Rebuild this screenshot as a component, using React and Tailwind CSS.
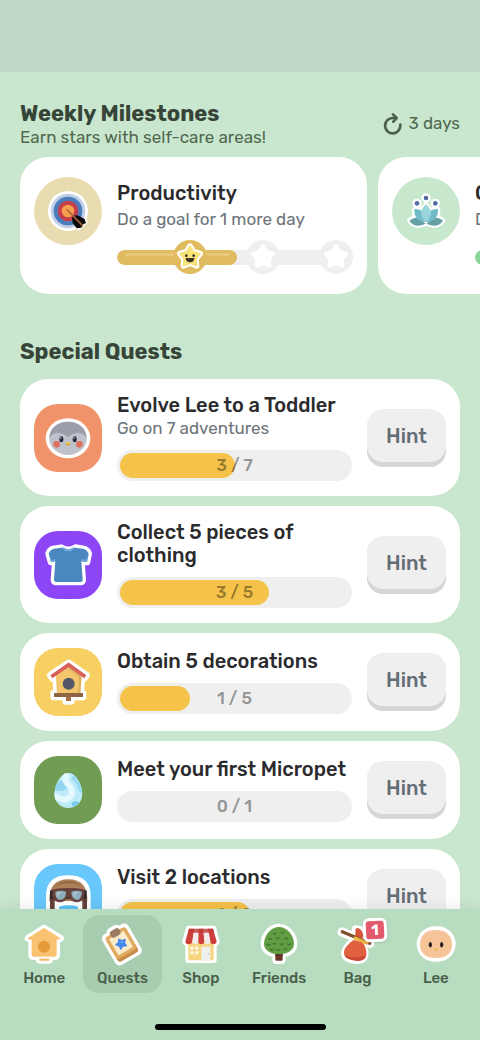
import clsx from "clsx";

const STAR = "51,18 62,35 82,41 69,57 71,78 51,70 31,78 33,57 20,41 40,35";

const TargetIcon = () => (
  <svg viewBox="0 0 204 204" className="size-[68px] shrink-0" aria-hidden="true">
    <circle cx="102" cy="102" r="102" fill="#e8dcb0" />
    <circle cx="102" cy="102" r="60" fill="#fff" />
    <path d="M104 98 L150 112 L158 136 L136 156 L112 146Z" fill="#fff" stroke="#fff" strokeWidth="6" strokeLinejoin="round" />
    <circle cx="102" cy="102" r="52" fill="#c2cfe6" />
    <circle cx="102" cy="102" r="43" fill="#4b7dbd" />
    <circle cx="102" cy="102" r="31" fill="#c63d4c" />
    <circle cx="102" cy="102" r="19" fill="#f6a04b" />
    <path d="M114 122 Q120 112 134 116 L152 126 L156 138 L148 142 L142 152 L128 154 L116 138Z" fill="#0b0b0c" />
    <path d="M100 99 L145 145" stroke="#a7653f" strokeWidth="5" strokeLinecap="round" />
  </svg>
);

const LotusIcon = () => (
  <svg viewBox="0 0 204 204" className="size-[68px] shrink-0" aria-hidden="true">
    <circle cx="102" cy="102" r="102" fill="#c8e8ce" />
    <g stroke="#fff" strokeWidth="14" strokeLinejoin="round" fill="#fff">
      <path d="M52 131 Q64 119 80 124 L102 139 L126 124 Q142 119 153 131 Q140 147 122 145 L102 140 L82 145 Q64 147 52 131Z" />
      <path d="M102 83 L116 99 L137 96 Q142 124 124 133 L80 133 Q63 124 68 96 L88 99Z" />
      <circle cx="102" cy="63" r="7" />
      <circle cx="75" cy="79" r="7" />
      <circle cx="130" cy="79" r="7" />
    </g>
    <path d="M52 131 Q70 117 84 126 L101 140 Q68 156 52 131Z" fill="#68a1a5" />
    <path d="M153 131 Q136 117 120 126 L103 140 Q137 156 153 131Z" fill="#68a1a5" />
    <path d="M67 96 Q104 96 102 135 Q65 133 67 96Z" fill="#72bcc8" />
    <path d="M138 96 Q100 96 102 135 Q140 133 138 96Z" fill="#72bcc8" />
    <path d="M102 82 Q131 108 102 136 Q73 108 102 82Z" fill="#9ad5dc" />
    <g fill="#506ba6">
      <circle cx="102" cy="63" r="7" />
      <circle cx="75" cy="79" r="7" />
      <circle cx="130" cy="79" r="7" />
    </g>
  </svg>
);

const PenguinIcon = () => (
  <svg viewBox="0 0 204 204" className="size-[68px]" aria-hidden="true">
    <ellipse cx="102" cy="103" rx="67" ry="60" fill="#fff" />
    <ellipse cx="102" cy="103" rx="56" ry="50" fill="#bfc1cb" />
    <path d="M46 104 C46 73 68 53 102 53 C136 53 158 73 158 104 C150 82 122 82 102 99 C82 82 54 82 46 104Z" fill="#9b9ea9" />
    <circle cx="68" cy="121" r="10" fill="#df6e5e" />
    <circle cx="136" cy="121" r="10" fill="#df6e5e" />
    <ellipse cx="82" cy="106" rx="6" ry="9" fill="#202638" />
    <ellipse cx="122" cy="106" rx="6" ry="9" fill="#202638" />
    <circle cx="80" cy="102" r="2" fill="#fff" />
    <circle cx="120" cy="102" r="2" fill="#fff" />
    <path d="M94 118 L102 113 L110 118 L102 127Z" fill="#f2cf4d" />
    <path d="M95 120 L102 122 L109 120" stroke="#a97a2e" strokeWidth="2" fill="none" />
  </svg>
);

const ShirtIcon = () => (
  <svg viewBox="0 0 204 204" className="size-[68px]" aria-hidden="true">
    <path
      d="M82 50 Q103 64 124 50 L150 54 Q160 57 164 68 L159 93 L142 91 L146 146 Q146 152 140 153 L66 153 Q60 152 60 146 L64 91 L51 93 L44 68 Q48 57 57 54Z"
      fill="#4a86c0"
      stroke="#fff"
      strokeWidth="20"
      strokeLinejoin="round"
      paintOrder="stroke"
    />
    <path d="M82 50 Q103 72 124 50 L118 49 Q103 60 88 49Z" fill="#74acd9" />
    <path d="M45 68 L51 93 L64 91 L65 84 L53 87Z M164 68 L159 93 L142 91 L141 84 L155 87Z" fill="#69a5d6" />
  </svg>
);

const BirdhouseIcon = () => (
  <svg viewBox="0 0 204 204" className="size-[68px]" aria-hidden="true">
    <path
      d="M104 46 L156 82 L150 90 L142 87 L139 134 L146 136 V146 H111 V159 H96 V146 H60 V136 L69 134 L66 87 L56 90 L50 82Z"
      fill="#fff"
      stroke="#fff"
      strokeWidth="22"
      strokeLinejoin="round"
    />
    <path d="M104 54 L143 82 L139 136 H69 L65 82Z" fill="#f3c56c" />
    <path d="M104 54 L143 82 L139 136 H132 L135 86 L104 64Z" fill="#dfaf61" />
    <path d="M52 86 L104 50 L154 86" fill="none" stroke="#d9605a" strokeWidth="11" />
    <circle cx="104" cy="107" r="18" fill="#535767" />
    <rect x="60" y="135" width="87" height="12" rx="1" fill="#8e6442" />
    <rect x="96" y="147" width="15" height="12" fill="#a37248" />
  </svg>
);

const EggIcon = () => (
  <svg viewBox="0 0 204 204" className="size-[68px]" aria-hidden="true">
    <defs>
      <clipPath id="egg-shell">
        <path d="M103 50 C126 50 145 88 145 114 C145 139 126 156 103 156 C80 156 61 139 61 114 C61 88 80 50 103 50Z" />
      </clipPath>
    </defs>
    <g clipPath="url(#egg-shell)">
      <rect x="60" y="48" width="90" height="110" fill="#bdebf9" />
      <path d="M70 82 Q84 66 94 76 Q104 88 98 98 Q84 110 60 102Z" fill="#94d6ef" />
      <path d="M118 54 Q140 70 148 112 Q132 108 130 94 Q128 78 112 70Z" fill="#9bdcf2" />
      <path d="M56 116 Q96 144 112 118 Q118 98 102 84 Q88 72 100 54" fill="none" stroke="#e4f9fe" strokeWidth="18" />
      <path d="M112 142 Q122 132 136 138 Q132 150 116 152Z" fill="#7cc8ea" />
    </g>
  </svg>
);

const AviatorIcon = () => (
  <svg viewBox="0 0 204 204" className="size-[68px]" aria-hidden="true">
    <path d="M36 178 V96 Q36 34 103 34 Q170 34 170 96 V178Z" fill="#fff" />
    <path d="M46 112 Q44 46 103 46 Q162 46 160 112Z" fill="#ad8057" />
    <path d="M60 68 Q103 32 146 68 Q124 58 103 58 Q82 58 60 68Z" fill="#936845" />
    <path d="M48 104 H62 V170 H48Z M145 104 H159 V170 H145Z" fill="#65413a" />
    <path d="M64 112 H143 V170 H64Z" fill="#fff" />
    <path d="M75 128 Q103 120 132 128 V178 H75Z" fill="#5bc1f7" />
    <path d="M48 79 H158 V105 H48Z" fill="#352a2f" />
    <path d="M56 76 Q103 68 150 76 Q156 112 130 115 Q112 114 103 98 Q94 114 76 115 Q50 112 56 76Z" fill="#68423d" />
    <path d="M64 84 Q78 77 96 83 Q96 106 78 108 Q64 106 64 84Z M112 83 Q130 77 144 84 Q142 106 130 108 Q112 106 112 83Z" fill="#8fb0bf" />
    <path d="M68 88 L82 83 L70 99Z M118 87 L132 82 L120 99Z" fill="#adc7d1" />
  </svg>
);

const HomeIcon = () => (
  <svg viewBox="0 0 120 120" className="size-10 overflow-visible" aria-hidden="true">
    <path
      d="M60 12 L110 43 L98 48 V92 Q98 98 92 98 H76 V109 H46 V98 H29 Q23 98 23 92 V48 L12 43Z"
      fill="#fff"
      stroke="#fff"
      strokeWidth="20"
      strokeLinejoin="round"
    />
    <path d="M60 12 L108 42 Q110 47 98 47 V92 Q98 98 92 98 H29 Q23 98 23 92 V47 Q10 47 12 42Z" fill="#f9c271" />
    <circle cx="60" cy="68" r="18" fill="#e29a3b" />
    <path d="M49 107 H73" stroke="#f4bd6d" strokeWidth="7" strokeLinecap="round" />
  </svg>
);

const ClipboardIcon = () => (
  <svg viewBox="0 0 120 120" className="size-10 overflow-visible" aria-hidden="true">
    <g transform="rotate(-30 60 60)">
      <rect x="14" y="8" width="90" height="106" rx="15" fill="#fff" />
      <rect x="36" y="0" width="46" height="34" rx="14" fill="#fff" />
      <rect x="24" y="20" width="70" height="84" rx="9" fill="#c98b45" />
      <rect x="24" y="18" width="70" height="76" rx="9" fill="#e2ab62" />
      <rect x="34" y="28" width="50" height="56" rx="2" fill="#fdebc8" />
      <rect x="43" y="10" width="32" height="22" rx="9" fill="#9c7b62" />
      <path
        d="M59 43 L65 51 L75 53 L68 61 L69 71 L59 67 L49 71 L50 61 L43 53 L53 51Z"
        fill="#4789f1"
        stroke="#4789f1"
        strokeWidth="4"
        strokeLinejoin="round"
      />
      <circle cx="63" cy="54" r="3" fill="#79b0fb" />
    </g>
  </svg>
);

const ShopIcon = () => (
  <svg viewBox="0 0 120 120" className="size-10 overflow-visible" aria-hidden="true">
    <path d="M23 14 H97 L107 54 L98 62 V108 H22 V62 L13 54Z" fill="#fff" stroke="#fff" strokeWidth="18" strokeLinejoin="round" />
    <rect x="22" y="44" width="76" height="65" rx="4" fill="#f7d57f" />
    <rect x="61" y="68" width="27" height="41" fill="#eef0ef" />
    <circle cx="82" cy="90" r="2" fill="#b9a887" />
    <rect x="28" y="68" width="24" height="23" fill="#fff7de" />
    <path d="M40 68 V91 M28 79 H52" stroke="#f2c766" strokeWidth="3" />
    <path d="M24 14 H40 L34 52 Q33 61 23 61 Q13 61 13 52Z" fill="#cc3f3b" />
    <path d="M40 14 H53 L52 54 Q50 61 42 61 Q34 60 34 52Z" fill="#f4ecea" />
    <path d="M53 14 H67 L70 52 Q69 61 61 61 Q52 60 52 54Z" fill="#cc3f3b" />
    <path d="M67 14 H81 L88 52 Q87 61 79 61 Q70 60 70 52Z" fill="#f4ecea" />
    <path d="M81 14 H96 L107 52 Q106 61 97 61 Q88 60 88 52Z" fill="#cc3f3b" />
    <path d="M24 14 H96 L99 26 H21Z" fill="#c23936" opacity=".8" />
  </svg>
);

const TreeIcon = () => (
  <svg viewBox="0 0 120 120" className="size-10 overflow-visible" aria-hidden="true">
    <g fill="#fff" stroke="#fff" strokeWidth="20" strokeLinejoin="round">
      <path d="M60 9 C84 9 105 34 105 60 C105 78 88 89 70 89 V107 Q70 110 66 110 H54 Q50 110 50 107 V89 C32 89 15 78 15 60 C15 34 36 9 60 9Z" />
    </g>
    <path d="M49 84 H71 V107 Q71 110 66 110 H54 Q49 110 49 107Z" fill="#6d3627" />
    <path d="M49 86 H71 V95 H49Z" fill="#4d261f" />
    <path d="M60 9 C84 9 105 34 105 60 C105 78 84 91 60 91 C36 91 15 78 15 60 C15 34 36 9 60 9Z" fill="#619d42" />
    <path
      d="M42 28 q5 4 9 0 M66 25 q5 4 9 0 M29 44 q5 4 9 0 M52 42 q5 4 9 0 M77 43 q5 4 9 0 M24 61 q5 4 9 0 M42 58 q5 4 9 0 M64 60 q5 4 9 0 M86 60 q5 4 9 0 M34 76 q5 4 9 0 M54 77 q5 4 9 0 M75 75 q5 4 9 0"
      fill="none"
      stroke="#3f7a30"
      strokeWidth="4"
      strokeLinecap="round"
    />
  </svg>
);

const BagIcon = () => (
  <svg viewBox="0 0 120 120" className="size-10 overflow-visible" aria-hidden="true">
    <g fill="#fff" stroke="#fff" strokeWidth="20" strokeLinejoin="round" strokeLinecap="round">
      <path d="M15 24 L99 58" strokeWidth="28" />
      <path d="M55 14 L70 16 L78 38 L73 52 Q90 84 82 101 Q74 112 52 109 Q24 106 22 89 Q24 70 52 46Z" />
    </g>
    <path d="M56 14 Q64 8 74 20 L80 36 L70 52 L54 44Z" fill="#d9543d" />
    <path d="M50 48 L76 54 C86 66 92 88 86 100 C80 112 62 112 50 109 C30 105 20 98 21 84 C23 70 36 58 50 48Z" fill="#e0603f" />
    <path d="M23 93 Q50 108 87 94 C84 112 62 112 50 109 C36 106 25 103 23 93Z" fill="#c94a36" />
    <path d="M16 23 L98 58" stroke="#81502c" strokeWidth="10" strokeLinecap="round" />
    <path d="M54 42 L90 57" stroke="#edb13f" strokeWidth="9" strokeLinecap="round" />
  </svg>
);

const LeeIcon = () => (
  <svg viewBox="0 0 120 120" className="size-10 overflow-visible" aria-hidden="true">
    <rect x="2" y="7" width="117" height="106" rx="53" fill="#fff" />
    <path d="M60 18 C92 18 108 36 108 62 C108 88 90 102 60 102 C30 102 12 88 12 62 C12 36 28 18 60 18Z" fill="#f7c49a" />
    <ellipse cx="43" cy="62" rx="5" ry="8" fill="#2d211e" />
    <ellipse cx="77" cy="62" rx="5" ry="8" fill="#2d211e" />
    <path d="M54 75 L60 73 L66 75 L60 82Z" fill="#edb938" />
  </svg>
);

const ReloadIcon = () => (
  <svg viewBox="0 0 60 72" className="h-6 w-5" fill="none" stroke="#4c614d" strokeWidth="8" strokeLinecap="round" strokeLinejoin="round" aria-hidden="true">
    <path d="M52 38 A23 23 0 1 1 29 18 H38" />
    <path d="M30 7 L41 18 L31 29" />
  </svg>
);

const milestones = [
  {
    title: "Productivity",
    detail: "Do a goal for 1 more day",
    icon: <TargetIcon />,
    fill: "bg-[#e0bb5f]",
    shine: "bg-[#e8c97c]",
    done: 1,
    progress: 51,
  },
  {
    title: "Calmness",
    detail: "Do a goal for 3 more days",
    icon: <LotusIcon />,
    fill: "bg-[#86d69a]",
    shine: "bg-[#a3e2b2]",
    done: 0,
    progress: 20,
  },
];

const quests = [
  { title: "Evolve Lee to a Toddler", detail: "Go on 7 adventures", current: 3, total: 7, icon: <PenguinIcon />, tile: "bg-[#f0936a]" },
  { title: "Collect 5 pieces of clothing", current: 3, total: 5, icon: <ShirtIcon />, tile: "bg-[#8c46f5]" },
  { title: "Obtain 5 decorations", current: 1, total: 5, icon: <BirdhouseIcon />, tile: "bg-[#f8cf63]" },
  { title: "Meet your first Micropet", current: 0, total: 1, icon: <EggIcon />, tile: "bg-[#719c53]" },
  { title: "Visit 2 locations", current: 1, total: 2, icon: <AviatorIcon />, tile: "bg-[#68c8fb]" },
];

const tabs = [
  { label: "Home", icon: <HomeIcon /> },
  { label: "Quests", icon: <ClipboardIcon />, active: true },
  { label: "Shop", icon: <ShopIcon /> },
  { label: "Friends", icon: <TreeIcon /> },
  { label: "Bag", icon: <BagIcon />, badge: 1 },
  { label: "Lee", icon: <LeeIcon /> },
];

const StarStep = ({ done, fill }) => (
  <span className={clsx("size-[34px] rounded-full", done ? fill : "bg-[#efefef]")}>
    <svg viewBox="0 0 102 102" aria-hidden="true">
      <polygon points={STAR} fill="#fff" stroke="#fff" strokeWidth={done ? 16 : 10} strokeLinejoin="round" />
      {done && (
        <>
          <polygon points={STAR} fill="#f8e27a" stroke="#f8e27a" strokeWidth="4" strokeLinejoin="round" />
          <circle cx="40" cy="47" r="4" fill="#3b3322" />
          <circle cx="62" cy="47" r="4" fill="#3b3322" />
          <path d="M38 54 H64 Q63 67 51 67 Q39 67 38 54Z" fill="#3b3322" />
        </>
      )}
    </svg>
  </span>
);

const MilestoneCard = ({ title, detail, icon, fill, shine, done, progress }) => (
  <article className="flex w-[347px] shrink-0 gap-[15px] rounded-[28px] bg-white px-[14px] py-5">
    {icon}
    <div className="min-w-0 flex-1 pt-1">
      <h3 className="text-[20px] leading-6 font-medium text-[#2b2b2d]">{title}</h3>
      <p className="mt-[2px] text-[17px] leading-6 text-[#6e7479]">{detail}</p>
      <div className="relative mt-[9px] flex h-[34px] items-center">
        <div className="h-[15px] w-full overflow-hidden rounded-full bg-[#efefef]">
          <div className={clsx("h-full rounded-full px-2 pt-[3px]", fill)} style={{ width: `${progress}%` }}>
            <div className={clsx("h-[3px] rounded-full", shine)} />
          </div>
        </div>
        <div className="absolute inset-0 flex justify-end gap-[39px]">
          {[0, 1, 2].map((step) => (
            <StarStep key={step} done={step < done} fill={fill} />
          ))}
        </div>
      </div>
    </div>
  </article>
);

const QuestCard = ({ title, detail, current, total, icon, tile }) => {
  const ratio = current / total;

  return (
    <li className="flex items-center gap-[15px] rounded-[28px] bg-white px-[14px] py-[15px]">
      <div className={clsx("size-[68px] shrink-0 overflow-hidden rounded-[24px]", tile)}>{icon}</div>
      <div className="min-w-0 flex-1">
        <h3 className="text-[20px] leading-[23px] font-medium text-[#2b2b2d]">{title}</h3>
        {detail && <p className="text-[17px] leading-[23px] text-[#6e7479]">{detail}</p>}
        <div
          role="progressbar"
          aria-label={title}
          aria-valuenow={current}
          aria-valuemax={total}
          className="relative mt-[10px] h-[31px] rounded-full bg-[#efefef] p-[3px]"
        >
          {current > 0 && (
            <div
              className="h-full rounded-full bg-[#f5c34a]"
              style={{ width: `calc(30px + (100% - 30px) * ${ratio})` }}
            />
          )}
          <span className="absolute inset-0 flex items-center justify-center text-[17px] font-medium text-black/40">
            {current} / {total}
          </span>
        </div>
      </div>
      <button className="h-[58px] w-[79px] shrink-0 rounded-[16px] bg-[#efefef] pb-1 text-[20px] font-medium text-[#656d76] shadow-[inset_0_-5px_0_#d6d6d6]">
        Hint
      </button>
    </li>
  );
};

const App = () => {
  return (
    <div className="flex h-screen flex-col bg-[#c8e7ce] font-['Rubik',Roboto,sans-serif]">
      <div className="h-[72px] shrink-0 bg-[#bdd8c7]" />

      <main className="min-h-0 flex-1 overflow-y-auto pt-7 [scrollbar-width:none]">
        <section>
          <header className="flex items-center justify-between px-5">
            <div>
              <h2 className="text-[22px] leading-[27px] font-bold text-[#374539]">Weekly Milestones</h2>
              <p className="text-[17px] leading-[21px] text-[#52674f]">Earn stars with self-care areas!</p>
            </div>
            <div className="flex items-center gap-[6px] text-[17px] text-[#52674f]">
              <ReloadIcon />
              3 days
            </div>
          </header>
          <div className="mt-[9px] flex gap-[11px] overflow-x-auto px-5 [scrollbar-width:none]">
            {milestones.map((milestone) => (
              <MilestoneCard key={milestone.title} {...milestone} />
            ))}
          </div>
        </section>

        <section className="mt-11 px-5 pb-5">
          <h2 className="text-[22px] leading-[27px] font-bold text-[#374539]">Special Quests</h2>
          <ul className="mt-[14px] flex flex-col gap-[10px]">
            {quests.map((quest) => (
              <QuestCard key={quest.title} {...quest} />
            ))}
          </ul>
        </section>
      </main>

      <nav className="relative shrink-0 bg-[#b7dcc0] px-[5px] pt-[6px] pb-[10px] shadow-[0_-2px_14px_rgba(0,0,0,0.08)]">
        <ul className="grid grid-cols-6">
          {tabs.map(({ label, icon, active, badge }) => (
            <li key={label}>
              <a
                href={`#${label.toLowerCase()}`}
                aria-current={active ? "page" : undefined}
                className={clsx(
                  "flex h-[78px] flex-col items-center gap-1 rounded-[16px] pt-[9px] text-[15px] leading-5 font-medium text-[#495f4a]",
                  active && "bg-[#a8ccb0]"
                )}
              >
                <span className="relative">
                  {icon}
                  {badge && (
                    <span className="absolute -top-[6px] left-[26px] flex size-6 -rotate-3 items-center justify-center rounded-[6px] border-[3px] border-white bg-[#e1596b] text-[15px] leading-none font-bold text-white shadow-sm">
                      {badge}
                    </span>
                  )}
                </span>
                {label}
              </a>
            </li>
          ))}
        </ul>
        <div className="mx-auto mt-[31px] h-[6px] w-[171px] rounded-full bg-black" />
      </nav>
    </div>
  );
};

export default App;
